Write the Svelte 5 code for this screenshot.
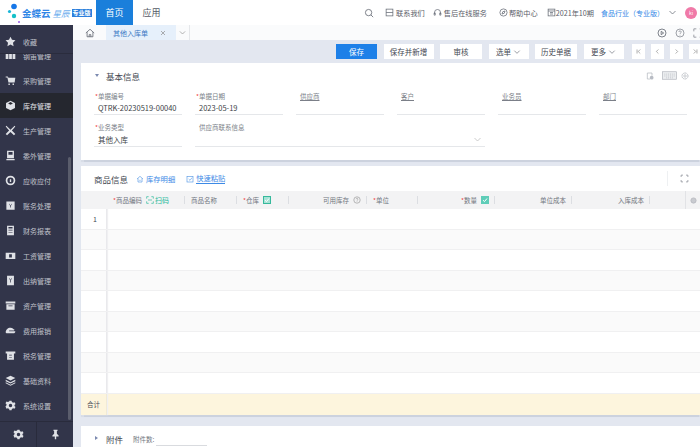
<script>
  const icons = {
    bars: 'M1 4h4v9H1zM6 4h4v9H6zM11 4h4v9h-4z',
    cart: 'M1 2h3l1 2h10l-1 7H5L3.500 3.500H1zM5 12.500h2v2H5zM11 12.500h2v2h-2z',
    box: 'M8 1l6.500 3.500v7L8 15l-6.500-3.500v-7zM8 3L4.500 5 8 7l3.500-2z',
    tools: 'M2 1l6 6 6-6 1 1-5 6 5 5-2 2-5-5-5 5-2-2 5-5-5-6z',
    doc: 'M3 1h10v11H3zM5 3v4h6V3zM2 13h12v2H2z',
    coin: 'M8 1a7 7 0 1 1 0 14A7 7 0 0 1 8 1zM8 3.500a4.500 4.500 0 1 0 0 9 4.500 4.500 0 0 0 0-9zM7 6h2v4H7z',
    ledger: 'M2 2h12v12H2zM6 5l2 3 2-3v1L8.500 8.500V11h-1V8.500L6 6z',
    report: 'M3 1h10v14H3zM5 3v2h6V3zM5 7v1h6V7zM5 10v1h6v-1z',
    wage: 'M1 4h14v9H1zM6 6v5h4V6z',
    cash: 'M3 1h10v14H3zM6 4l2 3 2-3v1L8.500 7.500V11h-1V7.500L6 5z',
    asset: 'M1 2h14v3H1zM2 6h12v8H2zM5 8v1h6V8z',
    fee: 'M1 11c0-4 3-7 7-7 3 0 4 2 6 3l-1 1H6v1h9c0 2-1 3-3 3H2z',
    tax: 'M1 2h14v3h-2v9H3V5H1zM6 7v1h4V7zM6 10v1h4v-1z',
    base: 'M8 1l7 3.500L8 8 1 4.500zM1 7l7 3.500L15 7v2l-7 3.500L1 9zM1 10.500L8 14l7-3.500v1.500L8 15.500 1 12z',
    gear: 'M6.500 1h3l.5 2 1.800.9 2-.8 1.500 2.600-1.500 1.500v1.600l1.500 1.500-1.500 2.600-2-.8-1.800.9-.5 2h-3l-.5-2-1.800-.9-2 .8L.700 9.300l1.500-1.500V6.200L.700 4.700l1.500-2.600 2 .8L6 2zM8 5.500a2.500 2.500 0 1 0 0 5 2.500 2.500 0 0 0 0-5z'
  };
  const menu = [
    ['钢笛管理', 'bars'], ['采购管理', 'cart'], ['库存管理', 'box'], ['生产管理', 'tools'], ['委外管理', 'doc'],
    ['应收应付', 'coin'], ['账务处理', 'ledger'], ['财务报表', 'report'], ['工资管理', 'wage'], ['出纳管理', 'cash'],
    ['资产管理', 'asset'], ['费用报销', 'fee'], ['税务管理', 'tax'], ['基础资料', 'base'], ['系统设置', 'gear']
  ];
  const buttons = [['保存并新增', 50, false], ['审核', 42, false], ['选单', 40, true], ['历史单据', 42, false], ['更多', 40, true]];
  const fieldsTop = [
    ['单据编号', 'QTRK-20230519-00040', true, false], ['单据日期', '2023-05-19', true, false],
    ['供应商', '', false, true], ['客户', '', false, true], ['业务员', '', false, true], ['部门', '', false, true]
  ];
  const rows = [1, 2, 3, 4, 5, 6, 7, 8, 9];
</script>

<div class="page">
  <header class="top">
    <div class="logo">
      <svg class="logomark" width="16" height="22" viewBox="0 0 16 22">
        <circle cx="7" cy="4.500" r="2.800" fill="#1677e8"/>
        <circle cx="2.500" cy="9.500" r="1.600" fill="#19b5d8"/>
        <circle cx="7" cy="14" r="2.200" fill="#14c0c8"/>
        <circle cx="12" cy="20" r="1" fill="#9a5be8"/>
      </svg>
      <span class="brand">金蝶云</span><span class="brand2">星辰</span><span class="edition">专业版</span>
    </div>
    <div class="navtab active">首页</div>
    <div class="navtab">应用</div>
    <div class="topright">
      <svg class="ti search" viewBox="0 0 12 12"><circle cx="5.500" cy="5.500" r="3.800"/><path d="M8.300 8.300L11 11"/></svg>
      <span class="tl contact"><svg class="ti" viewBox="0 0 12 12"><rect x="1.500" y="1.500" width="9" height="9"/><path d="M1.500 6h9"/></svg>联系我们</span>
      <span class="tl service"><svg class="ti" viewBox="0 0 12 12"><path d="M2 8V6a4 4 0 0 1 8 0v2M1.500 6.500h1.500v3H1.500zM9 6.500h1.500v3H9z"/></svg>售后在线服务</span>
      <span class="tl help"><svg class="ti" viewBox="0 0 12 12"><circle cx="6" cy="6" r="4.800"/><path d="M8 4L5 5 4 8l3-1z"/></svg>帮助中心</span>
      <span class="tl period"><svg class="ti" viewBox="0 0 12 12"><rect x="1.500" y="1.500" width="9" height="9"/><path d="M1.500 4h9M4 6h4M4 8h4"/></svg>2021年10期</span>
      <span class="org">食品行业（专业版）</span>
      <svg class="ti chev" viewBox="0 0 12 12"><path d="M2 4l4 4 4-4"/></svg>
      <span class="avatar">ki</span>
    </div>
  </header>

  <div class="body">
    <aside class="side">
      <div class="fav">
        <svg class="mi" viewBox="0 0 16 16"><path d="M8 1l2.200 4.600 5 .7-3.600 3.500.9 5L8 12.400l-4.500 2.400.9-5L.800 6.300l5-.7z"/></svg>
        <span>收藏</span>
      </div>
      <div class="menu">
        {#each menu as [name, icon]}
          <div class="mitem" class:sel={name === '库存管理'}>
            <svg class="mi" viewBox="0 0 16 16"><path fill-rule="evenodd" d={icons[icon]}/></svg>
            <span>{name}</span>
          </div>
        {/each}
      </div>
      <div class="sidefoot">
        <div class="fcell"><svg class="mi" viewBox="0 0 16 16"><path fill-rule="evenodd" d={icons.gear}/></svg></div>
        <div class="fcell"><svg class="mi" viewBox="0 0 16 16"><path d="M5 1h6v1.500l-1 .5v4l2.500 2.500V11H9v4H7v-4H3.500V9.500L6 7V3l-1-.5z"/></svg></div>
      </div>
      <div class="scroll"></div>
    </aside>

    <main class="main">
      <div class="tabs">
        <div class="home"><svg viewBox="0 0 12 12" class="ti"><path d="M1 6l5-4.500L11 6M2.500 5v5.500h7V5M5 10.500V8h2v2.500"/></svg></div>
        <div class="tab"><span>其他入库单</span><svg viewBox="0 0 12 12" class="ti x"><path d="M3 3l6 6M9 3l-6 6"/></svg></div>
        <div class="tabdown"><svg viewBox="0 0 12 12" class="ti"><path d="M2.500 4.500L6 8l3.500-3.500"/></svg></div>
        <div class="tabright">
          <svg viewBox="0 0 12 12" class="ti"><circle cx="6" cy="6" r="4.800"/><path d="M5 4l3 2-3 2z"/></svg>
          <svg viewBox="0 0 12 12" class="ti lighter"><circle cx="6" cy="6" r="4.800"/><path d="M4.600 4.800a1.400 1.400 0 1 1 2 1.300c-.4.300-.6.500-.6 1M6 8.200v.8"/></svg>
          <svg viewBox="0 0 12 12" class="ti lighter"><path d="M1 4V1h3M8 1h3v3M11 8v3H8M4 11H1V8"/></svg>
        </div>
      </div>

      <div class="toolbar">
        <button class="btn primary">保存</button>
        {#each buttons as [label, w, caret]}
          <button class="btn" style="width:{w}px">{label}{#if caret}<svg viewBox="0 0 12 12" class="ti caret"><path d="M2 4l4 4 4-4"/></svg>{/if}</button>
        {/each}
        <div class="pager">
          <button class="pg"><svg viewBox="0 0 12 12" class="ti"><path d="M3.500 2.500v7M9 2.500L5.500 6 9 9.500"/></svg></button>
          <button class="pg"><svg viewBox="0 0 12 12" class="ti"><path d="M7.500 2.500L4 6l3.500 3.500"/></svg></button>
          <button class="pg"><svg viewBox="0 0 12 12" class="ti"><path d="M4.500 2.500L8 6l-3.500 3.500"/></svg></button>
          <button class="pg"><svg viewBox="0 0 12 12" class="ti"><path d="M8.500 2.500v7M3 2.500L6.500 6 3 9.500"/></svg></button>
        </div>
      </div>

      <section class="card basic">
        <div class="basichead">
          <span class="tri down"></span><h2>基本信息</h2>
          <div class="basicicons">
            <svg viewBox="0 0 12 12" class="bi"><path d="M2 1.500h7v4M2 1.500v9h4"/><circle cx="8.500" cy="8.500" r="2.800" fill="#b8bcc4" stroke="none"/></svg>
            <svg viewBox="0 0 16 9" class="kb"><rect x=".5" y=".5" width="15" height="8"/><path d="M2.500 3h11M2.500 5h11M4.500 7h7" stroke-dasharray="1 1"/></svg>
            <svg viewBox="0 0 12 12" class="bi"><circle cx="6" cy="6" r="4.500" stroke-dasharray="2 .6" stroke-width="1.300"/><circle cx="6" cy="6" r="1.800"/></svg>
          </div>
        </div>
        <div class="formgrid">
          {#each fieldsTop as [label, value, req, link]}
            <div class="field">
              <div class="flabel" class:link><span class:req>{label}</span></div>
              <div class="fvalue">{value}</div>
            </div>
          {/each}
          <div class="field">
            <div class="flabel"><span class="req">业务类型</span></div>
            <div class="fvalue">其他入库</div>
          </div>
          <div class="field wide">
            <div class="flabel"><span>供应商联系信息</span></div>
            <div class="fvalue"><svg viewBox="0 0 12 12" class="ti dd"><path d="M2 4l4 4 4-4"/></svg></div>
          </div>
        </div>
      </section>

      <section class="card goods">
        <div class="goodshead">
          <h2>商品信息</h2>
          <span class="lnk"><svg viewBox="0 0 12 12" class="ti blue"><path d="M1.500 6L6 2l4.500 4M3 5v5.500h6V5M5 8h2"/></svg>库存明细</span>
          <span class="lnk"><svg viewBox="0 0 12 12" class="ti blue"><rect x="1.500" y="2" width="9" height="8.500"/><path d="M4 6l2 2 3-4"/></svg><span class="ul">快速粘贴</span></span>
          <div class="expand"><svg viewBox="0 0 12 12" class="ti lighter"><path d="M1.500 4V1.500H4M8 1.500h2.500V4M10.500 8v2.500H8M4 10.500H1.500V8"/></svg></div>
        </div>
        <div class="thead">
          <div class="th first"></div>
          <div class="th"><span class="req">商品编码</span><span class="scan"><svg viewBox="0 0 12 12" class="ti teal"><path d="M1 4V1h3M8 1h3v3M11 8v3H8M4 11H1V8M3 6h6"/></svg>扫码</span></div>
          <div class="th">商品名称</div>
          <div class="th"><span class="req">仓库</span><svg viewBox="0 0 8 8" class="chk"><rect x=".5" y=".5" width="7" height="7" fill="#a7e3d6" stroke="#37b99c"/><path d="M2 4.200l1.500 1.400L6 2.500" fill="none" stroke="#fff"/></svg></div>
          <div class="th end">可用库存<svg viewBox="0 0 12 12" class="ti q"><circle cx="6" cy="6" r="4.800"/><path d="M4.600 4.800a1.400 1.400 0 1 1 2 1.300c-.4.300-.6.500-.6 1M6 8.200v.8"/></svg></div>
          <div class="th"><span class="req">单位</span></div>
          <div class="th end"><span class="req">数量</span><svg viewBox="0 0 8 8" class="chk"><rect x=".5" y=".5" width="7" height="7" fill="#5fcdb8" stroke="#5fcdb8"/><path d="M2 4.200l1.500 1.400L6 2.500" fill="none" stroke="#fff"/></svg></div>
          <div class="th end">单位成本</div>
          <div class="th end">入库成本</div>
          <div class="th blank"></div>
          <div class="th gearcol"><svg viewBox="0 0 12 12" class="gearsm"><circle cx="6" cy="6" r="3.500"/></svg></div>
        </div>
        <div class="tbody">
          {#each rows as r}
            <div class="tr" class:odd={r % 2 === 0}>
              <div class="num">{r === 1 ? '1' : ''}</div>
              <div class="cell"></div>
            </div>
          {/each}
          <div class="tr total">
            <div class="num">合计</div>
            <div class="cell"></div>
          </div>
        </div>
      </section>

      <section class="card attach">
        <span class="tri right"></span><h2>附件</h2>
        <span class="attcount">附件数:</span><span class="attline"></span>
      </section>
    </main>
  </div>
</div>

<style>
  :global(body) { margin: 0; }
  .page {
    width: 700px; height: 447px; overflow: hidden; display: flex; flex-direction: column;
    font-family: "Noto Sans CJK SC", "Noto Sans", sans-serif; font-size: 7px; color: #555a66; background: #e3e7f0;
  }
  svg { display: block; flex: none; }
  .ti { width: 9px; height: 9px; fill: none; stroke: #666b75; stroke-width: 1; }
  .top { height: 25px; flex: none; background: #fff; display: flex; align-items: stretch; }
  .logo { width: 96px; display: flex; align-items: center; padding-left: 7px; box-sizing: border-box; flex: none; }
  .logomark { margin-top: 1px; }
  .brand { font-size: 9.500px; font-weight: 700; color: #2f86e6; margin-left: -1px; white-space: nowrap; }
  .brand2 { font-size: 8.500px; color: #6fb0ee; margin-left: 2px; font-style: italic; white-space: nowrap; }
  .edition { font-size: 6px; font-weight: 700; background: #2c7fdc; color: #fff; padding: 0 1px; margin-left: 2px; line-height: 8px; white-space: nowrap; }
  .navtab { width: 37px; display: flex; align-items: center; justify-content: center; font-size: 9px; color: #555a66; }
  .navtab.active { background: #1a7fdb; color: #fff; }
  .topright { margin-left: auto; display: flex; align-items: center; padding-right: 3px; font-size: 7.200px; color: #5c6069; }
  .search { margin-right: 11px; width: 10px; height: 10px; }
  .tl { display: flex; align-items: center; gap: 2px; white-space: nowrap; }
  .tl .ti { width: 9px; height: 9px; }
  .contact { margin-right: 8px; }
  .service { margin-right: 12px; }
  .help { gap: 1px; margin-right: 9px; }
  .period { gap: 0; margin-right: 7px; }
  .org { color: #2f86e6; white-space: nowrap; margin-right: 4px; font-size: 7px; }
  .chev { margin-right: 8px; }
  .avatar { width: 12px; height: 12px; border-radius: 50%; background: #f07aa8; color: #fff; font-size: 5px; display: flex; align-items: center; justify-content: center; }

  .body { flex: 1; display: flex; min-height: 0; }
  .side { width: 73px; flex: none; background: #32354a; position: relative; display: flex; flex-direction: column; color: #c0c2cb; }
  .mi { width: 11px; height: 11px; fill: #dfe1e6; margin-left: 5px; margin-right: 7px; }
  .fav { height: 29px; flex: none; display: flex; align-items: center; padding-top: 5px; border-bottom: 1px solid #2a2c3d; box-sizing: border-box; font-size: 7px; }
  .menu { flex: 1; min-height: 0; overflow: hidden; }
  .mitem { height: 25px; display: flex; align-items: center; font-size: 7px; white-space: nowrap; }
  .mitem:first-child { margin-top: -11px; }
  .mitem.sel { background: #25272f; color: #e2e3e8; }
  .sidefoot { height: 26px; flex: none; display: flex; border-top: 1px solid #292b3c; box-sizing: border-box; }
  .fcell { flex: 1; display: flex; align-items: center; justify-content: center; }
  .fcell:first-child { border-right: 1px solid #292b3c; }
  .fcell .mi { margin: 0; }
  .scroll { position: absolute; right: 2px; top: 132px; height: 263px; width: 3px; border-radius: 2px; background: #5a5d6c; }

  .main { flex: 1; min-width: 0; display: flex; flex-direction: column; }
  .tabs { height: 15px; flex: none; background: #fafbfc; display: flex; align-items: stretch; }
  .home { width: 33px; display: flex; align-items: center; justify-content: center; }
  .home .ti { width: 10px; height: 10px; }
  .tab { width: 70px; background: #e6f0fb; display: flex; align-items: center; justify-content: space-between; padding: 0 9px 0 7px; box-sizing: border-box; color: #3a78c4; font-size: 7px; white-space: nowrap; }
  .tab .x { width: 8px; height: 8px; stroke: #888; }
  .tabdown { width: 13px; display: flex; align-items: center; justify-content: center; border-right: 1px solid #e5e7ea; }
  .tabdown .ti { stroke: #999; }
  .tabright { margin-left: auto; display: flex; align-items: center; gap: 8px; margin-right: -3px; }
  .tabright .ti { width: 10px; height: 10px; }
  .lighter { stroke: #8a8e96; }

  .toolbar { height: 23px; flex: none; display: flex; align-items: center; gap: 6.500px; padding-left: 263px; box-sizing: border-box; }
  .btn { height: 15px; width: 41px; padding: 0; border: 0; background: #fff; font: inherit; font-size: 7.500px; color: #444852; display: flex; align-items: center; justify-content: center; gap: 2px; white-space: nowrap; flex: none; }
  .btn.primary { background: #1d80e8; color: #fff; }
  .caret { width: 8px; height: 8px; }
  .pager { display: flex; gap: 6px; margin-left: 2px; flex: none; }
  .pg { width: 13px; height: 15px; padding: 0; border: 0; background: #fff; display: flex; align-items: center; justify-content: center; }
  .pg .ti { width: 7px; height: 7px; stroke: #777; }

  .card { background: #fff; margin-left: 8px; flex: none; }
  .card h2 { margin: 0; font-weight: 400; }
  .basic { height: 97px; padding: 0 6px 0 13px; box-sizing: border-box; box-shadow: 0 1.500px 1px #ccd2de; }
  .basichead { height: 25px; display: flex; align-items: center; gap: 7px; padding-left: 1px; }
  .basichead h2 { font-size: 8.500px; color: #444852; }
  .tri { width: 0; height: 0; flex: none; display: block; }
  .tri.down { border-left: 2.500px solid transparent; border-right: 2.500px solid transparent; border-top: 3.500px solid #7c8ab0; }
  .basicicons { margin-left: auto; display: flex; align-items: center; gap: 4px; margin-right: 5px; }
  .bi { width: 8px; height: 8px; fill: none; stroke: #aeb2ba; stroke-width: 1; }
  .kb { width: 15px; height: 9px; fill: #eceef0; stroke: #aeb2ba; stroke-width: .7; margin-left: 4px; }
  .formgrid { display: grid; grid-template-columns: repeat(6, 88px); column-gap: 13px; row-gap: 4.500px; }
  .field { height: 27px; border-bottom: 1.500px solid #e5e7ea; box-sizing: border-box; }
  .field.wide { grid-column: span 3; }
  .flabel { height: 15px; display: flex; align-items: center; padding-left: 1px; color: #7b7f88; font-size: 6.500px; white-space: nowrap; }
  .flabel.link span { padding-left: 3px; text-decoration: underline; }
  .field.wide .flabel { padding-left: 4px; }
  .req::before { content: "*"; color: #f04040; font-size: 6.500px; }
  .fvalue { height: 10px; line-height: 9px; padding-left: 4px; color: #3c3f47; font-size: 7.500px; white-space: nowrap; position: relative; }
  .dd { position: absolute; right: 3px; top: 0; stroke: #bbb; }

  .goods { margin-top: 6px; height: 249px; box-shadow: 0 1.500px 1px #ccd2de; }
  .goodshead { height: 25px; display: flex; align-items: center; padding-left: 13px; gap: 8px; }
  .goodshead h2 { font-size: 8.500px; color: #444852; }
  .lnk { display: flex; align-items: center; gap: 2px; color: #3d8ae6; font-size: 7.300px; margin-right: 3px; white-space: nowrap; }
  .blue { stroke: #5a9be6; width: 8px; height: 8px; }
  .ul { border-bottom: 1px solid #3d8ae6; line-height: 9px; }
  .expand { margin-left: auto; width: 32px; height: 15px; border-left: 1px solid #eef0f2; display: flex; align-items: center; justify-content: center; }
  .thead { height: 18px; display: grid; grid-template-columns: 26px 78px 52px 52px 78px 51px 77px 77px 78px 35px 15px; background: #f3f3f4; color: #71757e; font-size: 6.500px; }
  .th { display: flex; align-items: center; padding-left: 6px; gap: 3px; position: relative; white-space: nowrap; }
  .th::after { content: ""; position: absolute; right: 0; top: 5px; height: 8px; width: 1px; background: #dcdee2; }
  .th.first, .th.blank { padding: 0; }
  .th.first::after, .th.blank::after, .th.gearcol::after { display: none; }
  .th.end { justify-content: flex-end; padding-right: 6px; }
  .th.gearcol { padding: 0; justify-content: center; border-left: 1px solid #e2e3e6; }
  .gearsm { width: 9px; height: 9px; fill: #c9cbd0; stroke: #b4b6bc; }
  .scan { display: flex; align-items: center; gap: 1px; color: #25b99a; font-size: 7px; margin-left: 1px; }
  .teal { stroke: #25b99a; width: 8px; height: 8px; }
  .q { width: 8px; height: 8px; stroke: #999; margin-left: 1px; }
  .chk { width: 8px; height: 8px; margin-left: 1px; }
  .tbody { display: flex; flex-direction: column; }
  .tr { height: 20.550px; flex: none; display: flex; border-bottom: 1px solid #f0f0f1; box-sizing: border-box; }
  .tr.odd { background: #fafafa; }
  .num { width: 26px; flex: none; border-right: 1px solid #e9e9ec; box-sizing: border-box; display: flex; align-items: center; padding-left: 12px; color: #444852; font-size: 7px; box-shadow: 1px 0 1px #f0f0f2; }
  .cell { flex: 1; }
  .tr.total { background: #fdf5dd; height: 21px; border: 0; }
  .tr.total .num { padding-left: 6px; border-right-color: #f0ead6; font-size: 6.500px; }

  .attach { margin-top: 11px; height: 30px; padding-left: 14px; display: flex; align-items: flex-start; padding-top: 6px; box-sizing: border-box; }
  .tri.right { border-top: 2.500px solid transparent; border-bottom: 2.500px solid transparent; border-left: 3.500px solid #7c8ab0; margin-top: 4px; margin-right: 8px; }
  .attach h2 { font-size: 8.500px; color: #444852; line-height: 14px; }
  .attcount { font-size: 6.500px; color: #71757e; margin-left: 10px; line-height: 15px; white-space: nowrap; }
  .attline { width: 51px; height: 1px; background: #d9dbdf; margin-left: 2px; margin-top: 13px; flex: none; }
</style>
